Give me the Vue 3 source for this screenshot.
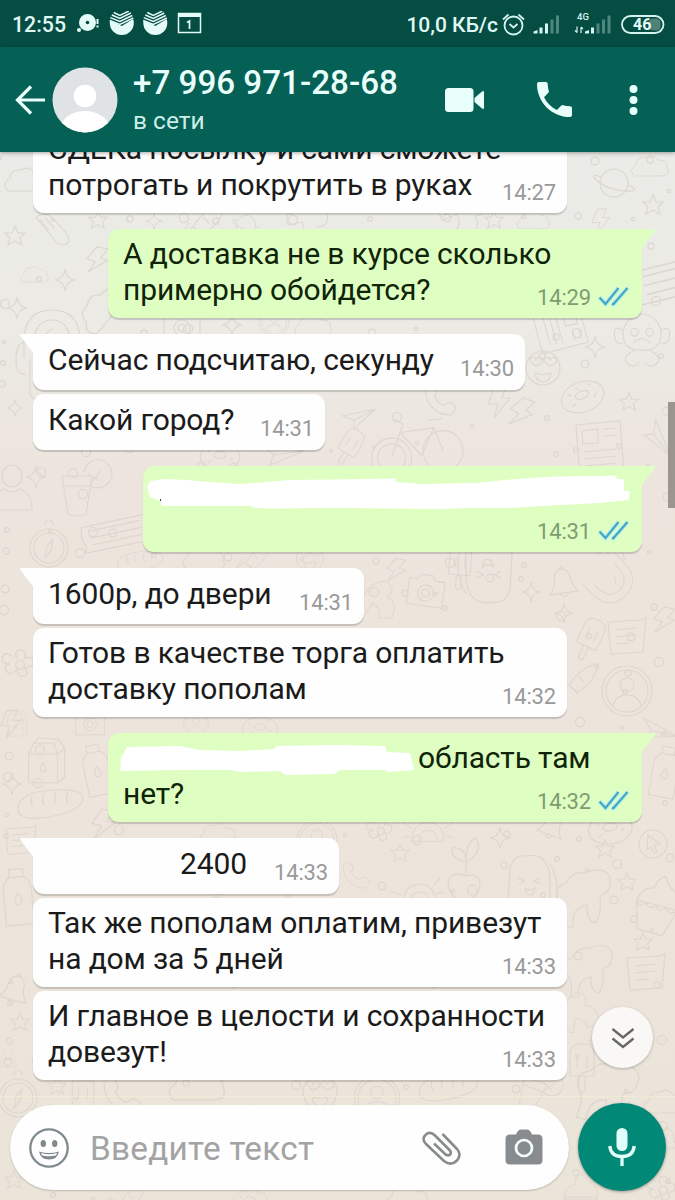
<template>
  <div class="phone">
    <div class="status-bar">
      <span class="clock">12:55</span>
      <svg class="status-left" width="126" height="26" viewBox="76 11 126 26">
        <g fill="#e4fbf8">
          <circle cx="87.500" cy="22.500" r="8.500" />
          <circle cx="79" cy="30" r="2" />
          <path d="M96.500 19h2v5h-2zM96.500 25.500h2v2h-2z" />
        </g>
        <circle cx="87.500" cy="22.500" r="1.800" fill="#054d43" />
        <g v-for="x in [121.8, 155.3]" :key="x" :transform="`translate(${x} 23)`">
          <circle r="12" fill="#e4fbf8" />
          <path d="M-13-13h26v8L0 3-13-3z" fill="#054d43" />
          <path d="M-8-10.500-2-7.500 7-12M-10-8-2-4.500 9-10M-11.500-5.300-2-1.500 10.500-7.500M-12-2.500-2 1.500 11.500-5" fill="none" stroke="#e4fbf8" stroke-width="1.400" />
        </g>
        <path d="M178.500 13.500h22v19h-22z" fill="none" stroke="#e4fbf8" stroke-width="1.500" />
        <path d="M178 13h23v4h-23z" fill="#e4fbf8" />
        <path d="M187 22.500l2.500-1.500v8" fill="none" stroke="#e4fbf8" stroke-width="1.700" />
      </svg>
      <span class="speed">10,0 КБ/с</span>
      <svg class="status-right" width="164" height="28" viewBox="502 9 164 28">
        <g fill="none" stroke="#d5f3ef" stroke-width="1.800">
          <circle cx="513.500" cy="24.500" r="9" />
          <path d="M509.500 23l4 3.500 4-3.500M503 18.500l5.500-5M524 18.500l-5.500-5" />
        </g>
        <g fill="#d5f3ef">
          <path d="M533.500 32.500v-2l4-1.500v3.500zM539.500 32.500v-6h3v6zM545 32.500v-10h3v10z" />
          <path d="M585 32.500v-2l4-1.500v3.500zM591 32.500v-6h3v6z" />
          <path d="M550.500 32.500V18.500h3v14zM556 32.500V14.500h3v18zM596.500 32.500v-10h3v10zM602 32.500V18.500h3v14zM607.500 32.500V14.500h3v18z" opacity=".35" />
        </g>
        <path d="M577 25.500v6m-2-2 2 2M581 32v-6m0 0 2 2" fill="none" stroke="#d5f3ef" stroke-width="1.200" />
        <text x="577" y="19" class="net">4G</text>
        <rect x="649" y="17.500" width="11.500" height="12" rx="4" fill="#4f817b" />
        <rect x="622" y="15" width="41.500" height="17" rx="8.500" fill="none" stroke="#d5f3ef" stroke-width="1.800" />
        <text x="633" y="29.300" class="battery">46</text>
      </svg>
    </div>

    <header class="header">
      <svg class="back" width="32" height="32" viewBox="0 0 32 32">
        <path d="M31 16H3M17 2.500 3.500 16 17 29.500" fill="none" stroke="#e9fffc" stroke-width="3.200" />
      </svg>
      <svg class="avatar" width="66" height="66" viewBox="0 0 66 66">
        <clipPath id="face"><circle cx="33" cy="33" r="32.500" /></clipPath>
        <g clip-path="url(#face)">
          <rect width="66" height="66" fill="#dfe3e5" />
          <circle cx="33" cy="29" r="11.300" fill="#fff" />
          <path d="M7 62c4-13 15-18 26-18s22 5 26 18v8H7z" fill="#fff" />
        </g>
      </svg>
      <div class="contact">
        <div class="phone-number">+7 996 971-28-68</div>
        <div class="online">в сети</div>
      </div>
      <svg class="video" width="40" height="26" viewBox="0 0 40 26">
        <rect x="0" y="1" width="28.500" height="24" rx="3.500" fill="#e9fffc" />
        <path d="M29.500 11 37 4.500q2-1.300 2 .800v15.400q0 2.100-2 .8L29.500 15z" fill="#e9fffc" />
      </svg>
      <svg class="call" width="35" height="35" viewBox="3 3 18 18">
        <path d="M6.620 10.790c1.440 2.830 3.760 5.140 6.590 6.590l2.200-2.200c.27-.27.67-.36 1.020-.24 1.120.37 2.330.57 3.570.57.55 0 1 .45 1 1V20c0 .55-.45 1-1 1-9.390 0-17-7.610-17-17 0-.55.45-1 1-1h3.500c.55 0 1 .45 1 1 0 1.250.2 2.450.57 3.570.11.35.03.74-.25 1.020l-2.200 2.200z" fill="#e9fffc" />
      </svg>
      <svg class="dots" width="9" height="32" viewBox="0 0 9 32">
        <circle v-for="y in [5, 16, 27]" :key="y" cx="4.500" :cy="y" r="4" fill="#e9fffc" />
      </svg>
    </header>

    <main class="chat">
      <svg class="wallpaper" width="675" height="1048" viewBox="0 152 675 1048">
        <circle v-for="(b, i) in bubbles" :key="'b' + i" :cx="b.x" :cy="b.y" :r="b.r" />
        <path
          v-for="(d, i) in doodles"
          :key="'d' + i"
          :d="shapes[d[0]]"
          :transform="`translate(${d[1]} ${d[2]}) rotate(${d[4] || 0}) scale(${d[3] || 1})`"
        />
      </svg>

      <div class="messages">
        <div
          v-for="(msg, i) in messages"
          :key="i"
          class="bubble"
          :class="{ out: msg.out, tail: msg.tail, first: i === 0, hidden: !msg.lines.length, single: msg.lines.length === 1 }"
          :style="{ width: msg.width + 'px' }"
        >
          <svg v-if="msg.tail" class="corner" width="15" height="24" viewBox="0 0 15 24">
            <path v-if="msg.out" d="M0 0h13.500q1.200.5.500 2L0 20z" />
            <path v-else d="M15 0H2Q.5.500 1.500 2L15 20z" />
          </svg>
          <svg v-if="msg.blot" class="blot" :width="msg.width" height="60" :viewBox="`0 0 ${msg.width} 60`">
            <path :d="msg.blot" fill="#fff" />
            <path v-if="msg.speck" :d="msg.speck" fill="#444" />
          </svg>
          <div class="text">
            <div v-for="(line, n) in msg.lines" :key="n">
              <span v-if="n === 0 && msg.indent" class="indent" :style="{ width: msg.indent + 'px' }"></span>{{ line }}
            </div>
          </div>
          <span class="time">{{ msg.time }}</span>
          <svg v-if="msg.out" class="ticks" width="31" height="21" viewBox="0 0 31 21">
            <path d="M1.500 11.500l6 6.500L20.500 2M14 17.500l1.300.8L29.500 2" fill="none" stroke="#b4f5ee" stroke-width="4.500" />
            <path d="M1.500 11.500l6 6.500L20.500 2M14 17.500l1.300.8L29.500 2" fill="none" stroke="#4aa3c0" stroke-width="2.200" />
          </svg>
        </div>
      </div>
      <div class="scrollbar"></div>
      <div class="seam"></div>

      <button class="to-bottom">
        <svg width="24" height="22" viewBox="0 0 24 22">
          <path d="M1.500 2 12 10.500 22.500 2M1.500 11.500 12 20l10.500-8.500" fill="none" stroke="#666" stroke-width="2.300" />
        </svg>
      </button>
    </main>

    <footer class="footer">
      <div class="input">
        <svg class="smile" width="40" height="40" viewBox="0 0 40 40">
          <circle cx="20" cy="20" r="18.700" fill="none" stroke="#80898c" stroke-width="2.300" />
          <ellipse cx="14.300" cy="15.500" rx="2.700" ry="3.500" fill="#80898c" />
          <ellipse cx="25.700" cy="15.500" rx="2.700" ry="3.500" fill="#80898c" />
          <path d="M10 23.500q10 3 20 0-1.500 8-10 8t-10-8z" fill="#80898c" />
          <path d="M12 25q8 2.500 16 0-.5 2-1.500 2.500-6.500 1.500-13 0Q12.500 27 12 25z" fill="#fff" />
        </svg>
        <span class="placeholder">Введите текст</span>
        <svg class="clip" width="40" height="36" viewBox="0 0 40 36">
          <path d="M12 13.500 23.500 24.500q3.500 2 5-.5 1-2-1-4L13 5.500Q8 1 4 4.500q-5 4 0 9.500L22 31q7 5.500 13-.5 5-6 0-11.500L20.500 4" fill="none" stroke="#878b8c" stroke-width="2.600" />
        </svg>
        <svg class="camera" width="38" height="36" viewBox="0 0 38 36">
          <path d="M5 5.500h6q2-5 5-5h6q3 0 5 5h6q4.500 0 4.500 4.500v21q0 4.500-4.500 4.500H5Q.5 35.500.5 31V10Q.5 5.500 5 5.500z" fill="#888c8f" />
          <circle cx="19" cy="19" r="8" fill="#888c8f" stroke="#f3ffff" stroke-width="2.700" />
        </svg>
      </div>
      <button class="mic">
        <svg width="28" height="40" viewBox="0 0 28 40">
          <rect x="8.500" y="1" width="11" height="23" rx="5.500" fill="#e3fffb" />
          <path d="M1.800 19q1 10.500 12.200 10.500T26.200 19M14 29v10" fill="none" stroke="#e3fffb" stroke-width="3.300" />
        </svg>
      </button>
    </footer>
  </div>
</template>

<script setup>
const messages = [
  { lines: ['СДЕКа посылку и сами сможете', 'потрогать и покрутить в руках'], time: '14:27', width: 534 },
  { lines: ['А доставка не в курсе сколько', 'примерно обойдется?'], time: '14:29', width: 534, out: true, tail: true },
  { lines: ['Сейчас подсчитаю, секунду'], time: '14:30', width: 492, tail: true },
  { lines: ['Какой город?'], time: '14:31', width: 292 },
  {
    lines: [],
    time: '14:31',
    width: 499,
    out: true,
    tail: true,
    blot: 'M4 21 7 15l15-2 21 1 24 2 30 2 50-4 45-.5 61-1v3.500l25 2 55-1 40-4 40-2.500 40-.5 20-.5 1 3.500h7v12h6l-1 9-29 3-40 2-50 3h-40l-30 1-100-1-70 .5-15-.5-5-2H19l-2-5-10-4z',
    speck: 'M17 33h1v2h-1z'
  },
  { lines: ['1600р, до двери'], time: '14:31', width: 331, tail: true },
  { lines: ['Готов в качестве торга оплатить', 'доставку пополам'], time: '14:32', width: 534 },
  {
    lines: ['область там', 'нет?'],
    time: '14:32',
    width: 534,
    out: true,
    tail: true,
    indent: 295,
    blot: 'M12 38 13 24l3-4 3-6 53-1 20 4 40 1 35-2 1-3 59-1 50 1 2 6 23 1 4 17-26 2-3-2h-45l-6 4-49 1-5-4-40 1-8-2H72z'
  },
  { lines: ['2400'], time: '14:33', width: 306, tail: true, indent: 132 },
  { lines: ['Так же пополам оплатим, привезут', 'на дом за 5 дней'], time: '14:33', width: 534 },
  { lines: ['И главное в целости и сохранности', 'довезут!'], time: '14:33', width: 534 }
]

// outlines centred on 0,0
const shapes = {
  spark: 'M0-11Q1-1 10 0 1 1 0 11-1 1-10 0-1-1 0-11z',
  star: 'M0-10 3-3 10-3 5 2 7 9 0 5-7 9-5 2-10-3-3-3z',
  cloud: 'M-22 10q-8-8 2-14 1-11 12-9 9-6 15 3 13 0 12 9 5 11-9 11z',
  planet: 'M-14 0a14 14 0 1 0 28 0 14 14 0 1 0-28 0M-13-6q-10-4-6 2 14 13 38 12 4-3-5-6',
  compass: 'M-19 3a19 19 0 1 0 38 0 19 19 0 1 0-38 0M-15 3a15 15 0 1 0 30 0 15 15 0 1 0-30 0M-4-20a4 5 0 1 1 8 0M4-6 2 6-4 13-2 1z',
  cup: 'M-14-18 16-18 10 20q-9 4-18 0zM-13-8H14M-6 2v.5M4 4v.5M-2 12v.5M8-22a14 14 0 1 1 7 14M12-20l12 7M25-24 14-8',
  person: 'M-10-16a10 11 0 1 0 20 0 10 11 0 1 0-20 0M-20 18q0-18 13-21 7 6 14 0 13 3 13 21z',
  note: 'M-18-14 14-16 20-18 17 16-15 18zM-10-6 10-8M-10 1 10-1M-10 8 4 7',
  badge: 'M-25 0a25 25 0 1 0 50 0 25 25 0 1 0-50 0M-21 0a21 21 0 1 0 42 0 21 21 0 1 0-42 0M-7-6a7 7 0 1 0 14 0 7 7 0 1 0-14 0M-14 15q2-11 14-11t14 11',
  cursor: 'M-14 0a14 14 0 1 0 28 0 14 14 0 1 0-28 0M-5-9 7 0 1 1 4 8 1 9-2 3-6 6z',
  camera: 'M-18-10h8l3-5H5l3 5h10v26h-36zM-8 3a8 8 0 1 0 16 0 8 8 0 1 0-16 0M-4 3a4 4 0 1 0 8 0 4 4 0 1 0-8 0',
  bell: 'M-14 10q6-7 6-15 1-9 8-9t8 9q0 8 6 15zM-4 10q4 8 8 0M-2-14q2-5 4 0',
  milk: 'M-16-10-10-22 12-22 16-10V22H-16zM-16-10H16L24-16 18-26-5-28-10-22M24-16V16L16 22M0 0q-6 9 0 10 6-1 0-10',
  bread: 'M-32 6q2-16 34-18 32-2 31 9-2 12-34 18-32 5-31-9zM-18-6q-2 10 2 10M-6-9q-3 11 1 12M6-10q-3 11 1 12M18-11q-3 11 0 11',
  bottle: 'M-7-28H7V-20q7 4 7 12V28h-28V-8q0-8 7-12zM-7-20H7M0-4q-7 10 0 12 7-2 0-12',
  flower: 'M-4 0a4 4 0 1 0 8 0 4 4 0 1 0-8 0M-3-6q-3-8 4-8 6 2 3 8 8-3 8 3t-8 5q5 6 0 8t-7-6q-5 7-9 2t3-7q-9 0-7-6t9-1',
  donut: 'M-22 2a22 15 0 1 0 44 0 22 15 0 1 0-44 0M-7 0a7 4 0 1 0 14 0 7 4 0 1 0-14 0M-14-5l4 2M-4-9l3 3M8-9l4 2M14 3l-3 3M-13 8l4-2',
  love: 'M-17 0a17 17 0 1 0 34 0 17 17 0 1 0-34 0M-7-2q-9-6-5-8t5 2q3-5 6-1t-6 7M7-2q-9-6-5-8t5 2q3-5 6-1T7-2M-8 5q8 3 16 0-1 9-8 9T-8 5',
  monkey: 'M-20-4a20 21 0 1 1 40 0q0 17-20 17T-20-4M-20-8q-10-6-9 5t9 8M20-8q10-6 9 5t-9 8M-12-6a4 4 0 1 0 8 0 4 4 0 1 0-8 0M4-6a4 4 0 1 0 8 0 4 4 0 1 0-8 0M-9 5q9-9 18 1M-8 13q-12 6-9 12 8 9 14 0M8 13q12 6 9 12-8 9-14 0',
  bike: 'M-42 10a20 20 0 1 0 40 0 20 20 0 1 0-40 0M-36 10a14 14 0 1 0 28 0 14 14 0 1 0-28 0M10 10a20 20 0 1 0 40 0 20 20 0 1 0-40 0M-22 10-6-22-14-28M-10-14H24L8 12-10-14M24-14 30 10M20-22h14',
  paper: 'M-22-24 22-28 26 24-18 28zM-16-18 0-20 0-6-15-5zM5-20l12-1M5-13l12-1M-14 3 18 0M-14 10 18 7M-13 17 18 14',
  rocket: 'M-24 16-12 8Q0-12 20-16 18 2-2 16l-10-8M-10 10l8 8M-2-2l6 6M-24 16l8-12',
  sprout: 'M0-2Q-16-6-14-16 0-18 0-2 0-22 10-26 18-12 0-2M0-2V12q-16-6-18 8 4 18 18 16t14-18Q10 8 0 12',
  toast: 'M-22 24-20-10Q-16-24-4-22 18-26 20 0V24zM-12 0l6 3-5 3M10 0 4 3l6 3M-5 10q5 4 10 0-1 8-5 7t-5-7M20-14q10 16 6 38',
  dog: 'M-24 30q4-20-6-28-4-12 8-16 6-12 18-10 20-8 26 4 2 16-10 18 2 16-4 28-10-2-9-18-16 2-14 22z',
  cake: 'M-20 0Q-18-14-6-16-6-26 2-30 8-20 14-18 24-10 22 0zM-20 0q4 8 10 0 5 8 10 0 5 8 10 0 6 8 12 0L14 28H-12z',
  crab: 'M-20 12q0-24 20-24t20 24zM-12 12q0-14 12-14t12 14M-20-4l-12-8M20-4l12-8M-32 6h10M22 6h10',
  helmet: 'M-28 24V4q2-28 28-28T28 4v20M-18 14V6q2-20 18-20T18 6v8M-7 4q2-8 8-9M-28 8q-8 2-8 18t10 14M-22 26v34q4 8 14 7',
  spoon: 'M-20-14q10-8 20 2l14 16q6 10-2 12t-12-6zM-16-12l10 12M-10-14l10 12',
  plane: 'M-20-10 22-4-12 10-8 0zM-8 0 22-4',
  phone: 'M-16-12q6-8 10-2t0 10q4 8 10 10 6-6 11-1t-3 11q-14 2-24-12-5-9-4-16z',
  chip: 'M-30-10 34-20 38 6-28 16q4-6 0-10t-2-16M-22-6 28-14M-22 1 30-7M-20 8 30 0',
  bolt: 'M-4-14 8-16 4-4 12-4-4 16 0 2-10 2z',
  arm: 'M-20 24Q-24-18-4-24 12-22 6-8 22-8 24 12L10 20Q6 8-6 8L-8 26z',
  popsicle: 'M-12 10v-22q0-10 12-10t12 10v22zM-3 10v14q3 4 6 0V10M-5-10V2M5-10V2'
}

const doodles = [
  ['cloud', 28, 182, 0.9], ['spoon', 54, 230, 0.9], ['star', 15, 236, 1], ['star', 98, 220, 0.9], ['spark', 154, 221, 0.8],
  ['cloud', 36, 276, 0.6], ['spark', 65, 280, 1], ['spark', 17, 308, 1], ['bolt', 96, 260, 0.9, 20], ['helmet', 52, 334, 1],
  ['cloud', 104, 308, 1.1, -50], ['camera', 182, 325, 1], ['spark', 232, 325, 1], ['badge', 274, 322, 0.6], ['cloud', 315, 328, 0.8],
  ['rocket', 205, 219, 1], ['planet', 246, 225, 0.7], ['arm', 310, 224, 0.8, 70], ['planet', 614, 183, 1], ['cloud', 652, 168, 0.8],
  ['star', 653, 205, 1], ['bolt', 600, 221, 0.8], ['cloud', 535, 222, 0.7], ['arm', 466, 215, 0.9, 60], ['star', 494, 220, 0.9],
  ['chip', 672, 282, 1.3, -5], ['paper', 560, 327, 0.9, 80], ['monkey', 642, 338, 0.95], ['spark', 595, 347, 1], ['love', 543, 368, 1],
  ['donut', 582, 395, 1, -20], ['star', 629, 402, 0.9], ['plane', 360, 418, 0.8, -20], ['bike', 412, 445, 1, -8], ['phone', 440, 400, 0.9],
  ['bolt', 498, 402, 1], ['bolt', 520, 412, 1, 30], ['paper', 598, 449, 1], ['plane', 657, 440, 0.9, 60], ['popsicle', 350, 446, 0.8, 30],
  ['person', 12, 492, 1], ['spark', 36, 477, 1], ['cup', 76, 494, 1], ['compass', 49, 545, 1], ['chip', 112, 536, 1, -3],
  ['bread', 140, 560, 0.7], ['donut', 220, 455, 0.9], ['plane', 282, 455, 1], ['spark', 15, 408, 0.8], ['cloud', 206, 560, 0.9],
  ['rocket', 255, 556, 0.8], ['love', 310, 558, 0.8], ['bolt', 395, 570, 0.8, 20], ['popsicle', 460, 566, 0.9, 5], ['toast', 488, 578, 1.1, 180],
  ['camera', 426, 590, 1, 8], ['spark', 531, 592, 0.9], ['bell', 563, 583, 1, -8], ['spark', 564, 613, 0.9], ['helmet', 612, 582, 0.8, 135],
  ['arm', 380, 600, 0.8, 30], ['note', 626, 636, 1], ['bolt', 663, 620, 0.9, 20], ['popsicle', 590, 638, 0.9, 25], ['badge', 627, 691, 1],
  ['rocket', 580, 678, 0.9], ['flower', 20, 665, 1.1], ['milk', 15, 725, 0.5], ['plane', 658, 733, 0.9, 20], ['bolt', 10, 724, 0.9],
  ['milk', 43, 763, 0.9], ['bread', 50, 802, 1], ['spark', 12, 784, 1], ['bottle', 97, 770, 0.9, -12], ['badge', 196, 724, 0.5],
  ['donut', 260, 727, 0.8], ['camera', 90, 722, 0.8], ['note', 20, 840, 0.8], ['bottle', 18, 897, 1, -5], ['bolt', 102, 824, 1, 15],
  ['cloud', 220, 836, 0.8], ['badge', 317, 840, 0.8], ['flower', 381, 831, 0.9], ['crab', 428, 832, 0.8], ['spark', 500, 838, 1],
  ['bell', 552, 826, 0.9, 20], ['donut', 610, 827, 1, -10], ['star', 400, 853, 0.9], ['sprout', 466, 864, 1], ['crab', 418, 894, 0.8, -15],
  ['toast', 530, 878, 1], ['dog', 588, 897, 1], ['star', 605, 849, 0.9], ['cursor', 653, 844, 1], ['star', 627, 882, 0.9],
  ['cake', 656, 905, 1, 15], ['star', 643, 942, 0.9], ['note', 645, 972, 1], ['dog', 592, 970, 0.9], ['bottle', 665, 772, 0.9, 10],
  ['phone', 356, 875, 0.8], ['bell', 15, 990, 1, 15], ['star', 20, 1022, 0.9], ['compass', 18, 1095, 1], ['star', 57, 1086, 0.9],
  ['popsicle', 83, 1090, 0.9, 180], ['phone', 122, 1096, 1.1], ['cloud', 200, 1088, 1.2], ['love', 320, 1092, 1], ['badge', 377, 1098, 0.9],
  ['bread', 448, 1086, 0.9], ['cup', 530, 1094, 0.8, 20], ['dog', 610, 1092, 1.1, 15], ['cloud', 667, 1104, 0.9], ['popsicle', 582, 1066, 1],
  ['arm', 580, 1012, 0.8], ['flower', 663, 1190, 1], ['star', 14, 1180, 0.9], ['rocket', 130, 1196, 0.8],
  ['donut', 250, 1200, 0.8], ['cloud', 410, 1200, 0.9], ['cake', 580, 1197, 0.8], ['bell', 667, 1140, 0.8], ['person', 8, 1060, 0.4]
]

// small rings scattered between the doodles
const bubbles = []
for (let row = 0; row < 38; row++) {
  for (let col = 0; col < 20; col++) {
    const n = (row * 73 + col * 151 + row * col * 17) % 97
    if (n % 2) continue
    bubbles.push({ x: col * 36 + (n % 23), y: 158 + row * 28 + (n % 17), r: 1.6 + (n % 5) * 0.75 })
  }
}
</script>

<style>
body { margin: 0; overflow: hidden; }
</style>

<style scoped>
.phone { width: 675px; height: 1200px; display: flex; flex-direction: column; position: relative; overflow: hidden; font-family: Roboto, "Liberation Sans", sans-serif; background: linear-gradient(#ebebe7 152px, #ebeae5 330px, #ede5dd 470px, #ede5dc 800px, #ebe4d9 1200px); }
button { border: 0; padding: 0; display: flex; align-items: center; justify-content: center; border-radius: 50%; }

.status-bar { height: 47px; flex: none; display: flex; align-items: center; background: #054d43; color: #e0f8f5; font-size: 21.300px; font-weight: 500; position: relative; z-index: 2; white-space: nowrap; }
.clock { width: 64px; margin-left: 12px; padding-top: 1px; }
.speed { margin-left: auto; margin-right: 4px; padding-top: 2px; font-size: 21px; }
.status-right { margin-right: 9px; }
.net { font-size: 9.500px; font-weight: 500; fill: #d5f3ef; }
.battery { font-size: 16px; font-weight: 700; fill: #e4fbf8; }

.header { height: 105px; flex: none; display: flex; align-items: center; background: #056055; color: #e9fffc; position: relative; z-index: 2; box-shadow: 0 1px 4px rgba(0, 0, 0, 0.35); }
.back { margin-left: 14px; }
.avatar { margin-left: 6px; }
.contact { margin-left: 15px; width: 300px; height: 85px; white-space: nowrap; }
.phone-number { font-size: 33.200px; font-weight: 500; line-height: 40px; margin-top: 6px; }
.online { font-size: 24.500px; line-height: 30px; margin-top: 3px; color: #cdeee9; }
.video { margin-left: 12px; }
.call { margin-left: 52px; }
.dots { margin-left: 57px; }

.chat { height: 953px; flex: none; position: relative; }
.wallpaper { position: absolute; left: 0; top: 0; fill: none; stroke: #ddd7cf; stroke-width: 1.200; }
.messages { position: relative; display: flex; flex-direction: column; align-items: flex-start; padding: 0 33px; }
.bubble { position: relative; box-sizing: border-box; display: flex; align-items: flex-end; min-height: 56px; padding: 7px 11px 7px 15px; margin-top: 4px; background: #fefefe; color: #1b1b1b; border-radius: 11px; box-shadow: 0 1.500px 1px rgba(0, 0, 0, 0.17); }
.bubble.out { align-self: flex-end; background: #dffec2; color: #0f2408; padding-right: 13px; }
.bubble.single { padding-top: 8px; padding-bottom: 8px; }
.bubble.tail { margin-top: 16px; border-top-left-radius: 0; }
.bubble.out.tail { border-top-left-radius: 11px; border-top-right-radius: 0; }
.bubble.out + .bubble { margin-top: 16px; }
.bubble.first { margin-top: -28px; }
.bubble.hidden { min-height: 86px; }
.corner { position: absolute; top: 0; left: -14px; fill: #fefefe; }
.out .corner { left: auto; right: -14px; fill: #dffec2; }
.blot { position: absolute; left: 0; top: 0; }
.text { flex: 1 1 0; min-width: 0; align-self: flex-start; font-size: 30px; line-height: 35.500px; letter-spacing: -0.140px; white-space: nowrap; padding-bottom: 4px; }
.single .text { padding-bottom: 0; }
.indent { display: inline-block; }
.time { font-size: 22px; letter-spacing: -0.150px; line-height: 26px; color: #999; position: relative; }
.out .time { color: #7f9c72; }
.ticks { margin-left: 7px; margin-bottom: 4px; }

.scrollbar { position: absolute; right: 0; top: 250px; width: 7px; height: 106px; background: #9a958f; }
.seam { position: absolute; left: 0; right: 0; top: 944px; height: 1px; background: #eeebd6; }
.to-bottom { position: absolute; left: 592px; top: 855px; width: 61px; height: 61px; background: #f9f8f6; box-shadow: 0 1px 3px rgba(0, 0, 0, 0.25); }

.footer { flex: none; display: flex; align-items: flex-start; padding-left: 10px; position: relative; }
.input { width: 559px; height: 85px; box-sizing: border-box; display: flex; align-items: center; background: #fefefe; border-radius: 43px; box-shadow: 0 1px 2px rgba(0, 0, 0, 0.2); }
.smile { margin-left: 19px; }
.placeholder { margin-left: 21px; width: 332px; padding-top: 2px; font-size: 33.300px; letter-spacing: 0.250px; color: #a3a3a3; white-space: nowrap; }
.camera { margin-left: 43px; margin-top: -2px; }
.mic { width: 88px; height: 88px; margin: -2px 0 0 9px; background: #018877; box-shadow: 0 1px 3px rgba(0, 0, 0, 0.35); }
</style>
